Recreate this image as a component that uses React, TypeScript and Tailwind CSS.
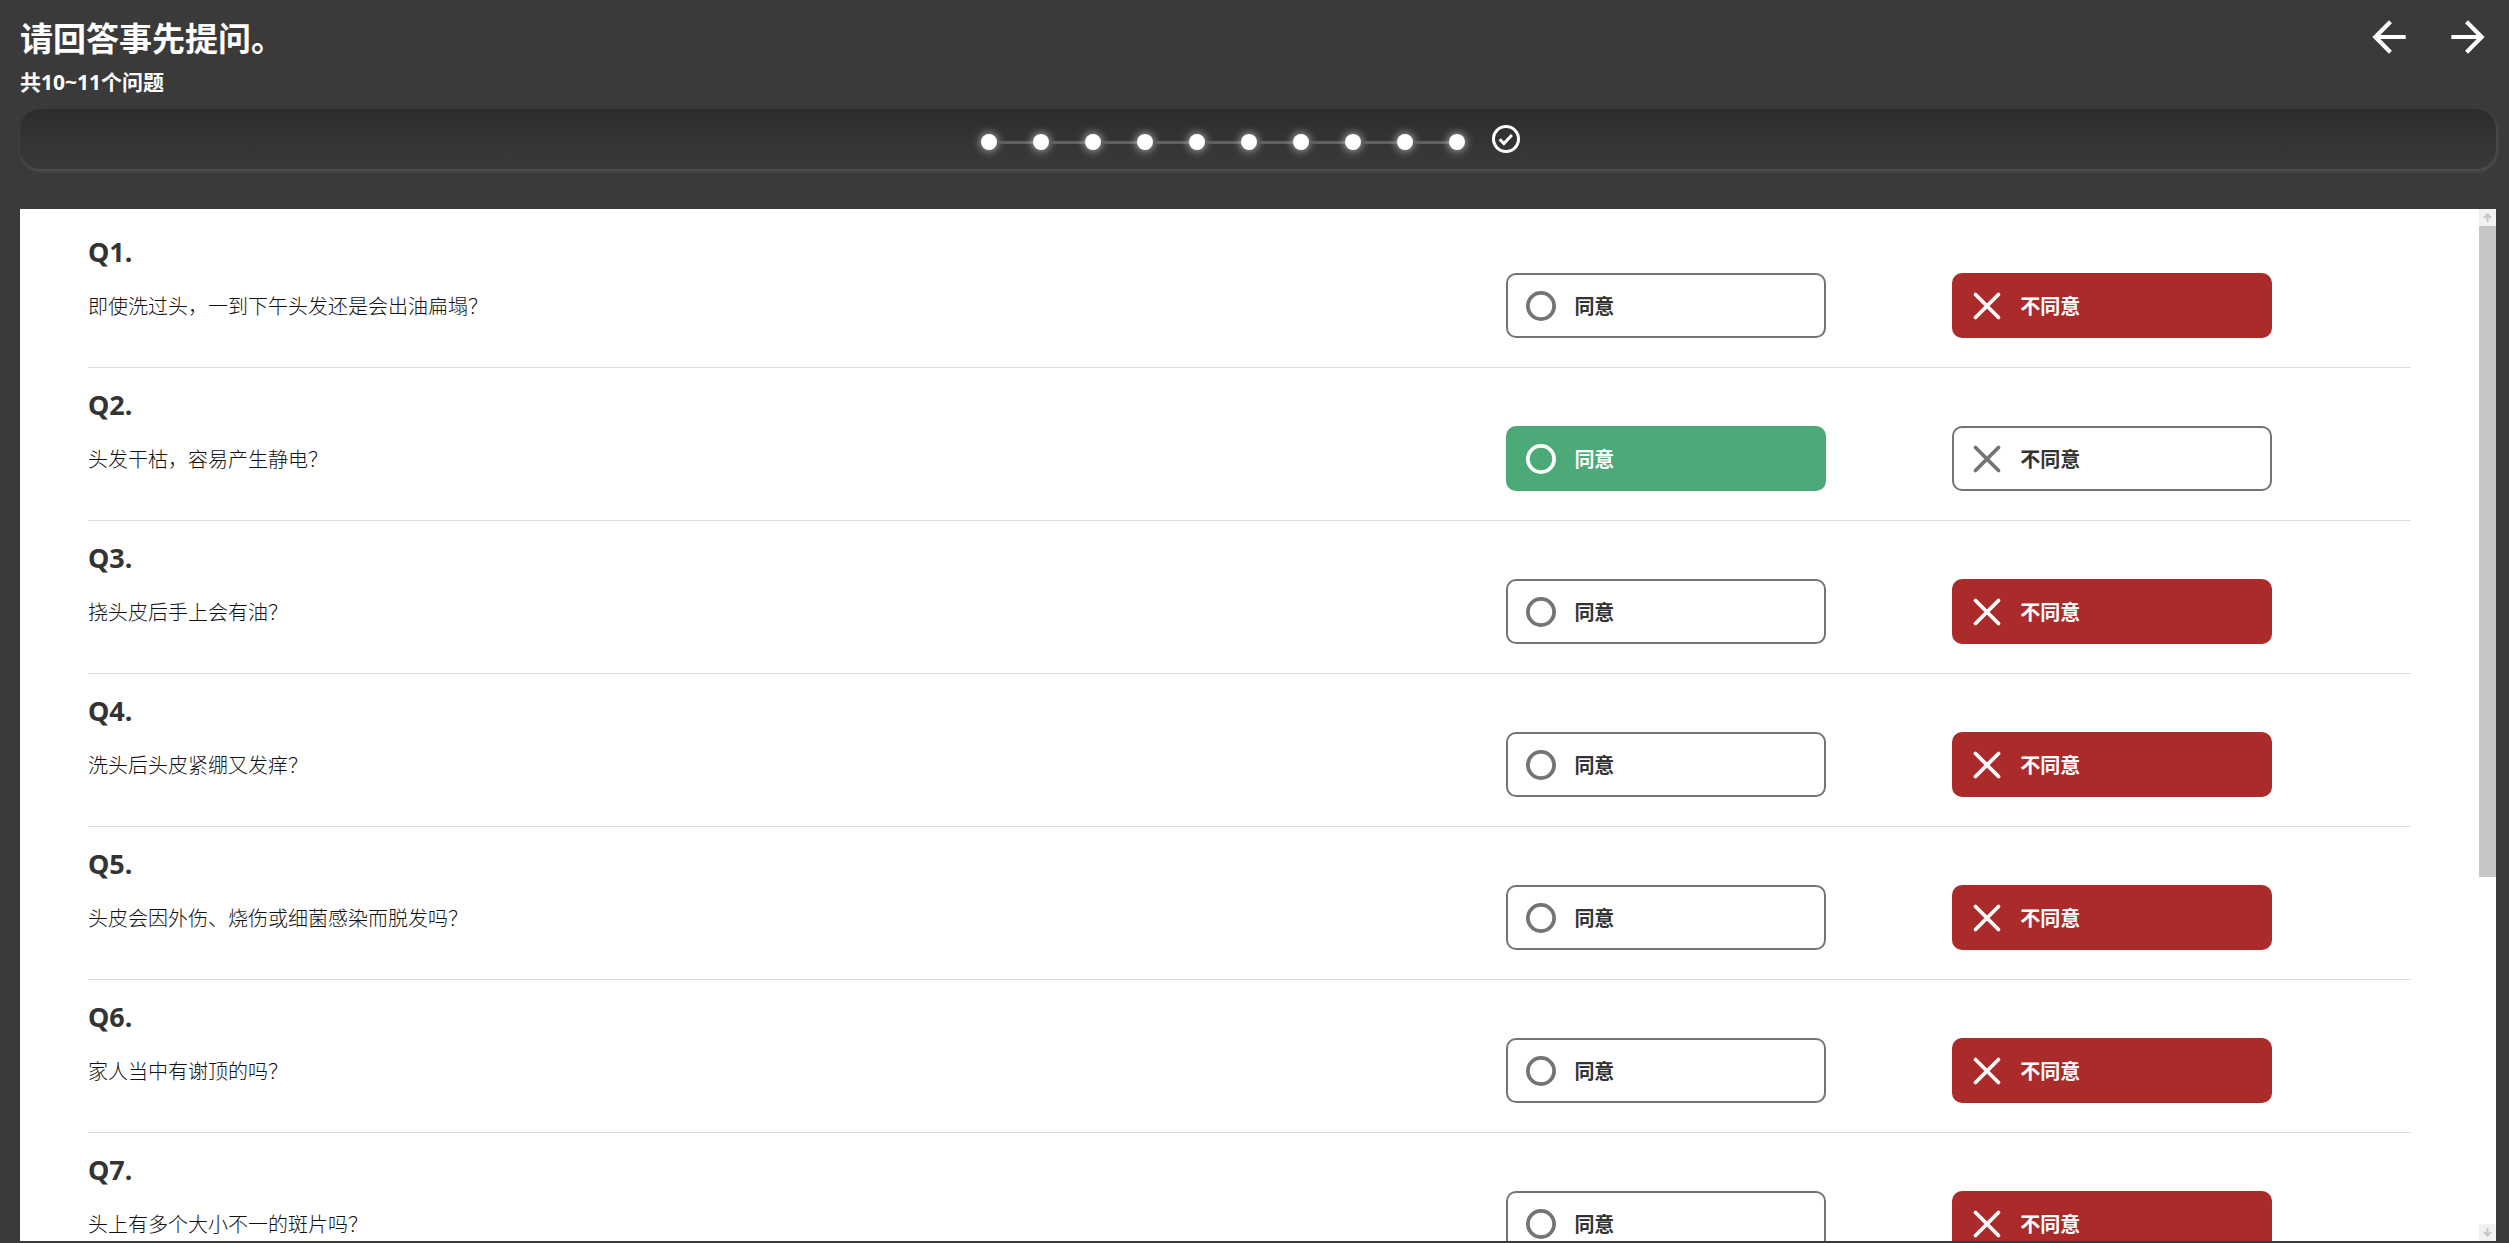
import React, { useState } from "react";
import { MdArrowBack, MdArrowForward } from "react-icons/md";

type Answer = "agree" | "disagree";

const questions: { text: string; answer: Answer }[] = [
  { text: "即使洗过头，一到下午头发还是会出油扁塌？", answer: "disagree" },
  { text: "头发干枯，容易产生静电？", answer: "agree" },
  { text: "挠头皮后手上会有油？", answer: "disagree" },
  { text: "洗头后头皮紧绷又发痒？", answer: "disagree" },
  { text: "头皮会因外伤、烧伤或细菌感染而脱发吗？", answer: "disagree" },
  { text: "家人当中有谢顶的吗？", answer: "disagree" },
  { text: "头上有多个大小不一的斑片吗？", answer: "disagree" },
];

const STEPS = 10;

function Progress() {
  return (
    <div className="flex h-[60px] items-center justify-center rounded-[20px] bg-linear-to-b from-[#2c2c2c] to-[#3a3a3a] pr-[15px] shadow-[1px_2px_3px_1px_#4c4c4c]">
      <ol className="flex items-center pt-[6px]">
        {Array.from({ length: STEPS }, (_, i) => (
          <li key={i} className="flex items-center">
            {i > 0 && <span className="h-[3px] w-9 bg-[#606060]" />}
            <span className="size-4 rounded-full bg-white shadow-[0_0_8px_1px_rgba(255,255,255,0.6)]" />
          </li>
        ))}
      </ol>
      <svg viewBox="0 0 28 28" className="ml-[27px] size-7" fill="none" stroke="#fff">
        <circle cx="14" cy="14" r="12.5" strokeWidth="3" />
        <path d="M7.7 14.3l4.2 4.2 8-8.5" strokeWidth="3" />
      </svg>
    </div>
  );
}

function Choice({ kind, active, onClick }: { kind: Answer; active: boolean; onClick: () => void }) {
  const color = active
    ? kind === "agree"
      ? "border-[#4ca978] bg-[#4ca978] text-white"
      : "border-[#ab2b2b] bg-[#ab2b2b] text-white"
    : "border-[#747474] bg-white text-[#747474]";

  return (
    <button
      type="button"
      aria-pressed={active}
      onClick={onClick}
      className={`flex h-[65px] w-80 items-center gap-[18px] rounded-[10px] border-2 pl-[18px] ${color}`}
    >
      <svg viewBox="0 0 30 30" className="size-[30px]" fill="none" stroke="currentColor">
        {kind === "agree" ? (
          <circle cx="15" cy="15" r="13.1" strokeWidth="3.8" />
        ) : (
          <path d="M3.5 3.5l23 23M26.5 3.5l-23 23" strokeWidth="3.8" strokeLinecap="round" />
        )}
      </svg>
      <span className={`pt-[2px] text-[20px] font-bold ${active ? "text-white" : "text-[#333]"}`}>
        {kind === "agree" ? "同意" : "不同意"}
      </span>
    </button>
  );
}

export default function App() {
  const [answers, setAnswers] = useState<Answer[]>(questions.map((q) => q.answer));

  const choose = (index: number, value: Answer) =>
    setAnswers(answers.map((a, i) => (i === index ? value : a)));

  return (
    <div className="flex h-screen flex-col bg-[#3a3a3a] pr-[13px] pb-[2px] pl-5 font-['Noto_Sans','Noto_Sans_CJK_SC',sans-serif]">
      <header className="flex items-start justify-between pt-3 pb-[10px]">
        <div className="pt-px text-white">
          <h1 className="text-[33px] leading-[52px] font-bold">请回答事先提问。</h1>
          <p className="text-[21px] leading-[34px] font-bold">共10~11个问题</p>
        </div>
        <nav className="flex gap-[29px] pr-[3px] text-[50px] text-white">
          <button type="button" aria-label="上一页"><MdArrowBack /></button>
          <button type="button" aria-label="下一页"><MdArrowForward /></button>
        </nav>
      </header>

      <Progress />

      <main className="mt-10 flex min-h-0 flex-1 bg-white">
        <div className="flex-1 overflow-y-auto px-[68px] pt-[6px] [scrollbar-width:none]">
          {questions.map((q, i) => (
            <section
              key={i}
              className="grid h-[153px] grid-cols-[1419fr_446fr_459fr] items-end border-b border-[#dedede] pb-[28px] text-[#333]"
            >
              <div>
                <h2 className="text-[27px] leading-[44px] font-bold">Q{i + 1}.</h2>
                <p className="text-[20px] leading-[65px] font-light text-[#111]">{q.text}</p>
              </div>
              <div className="pb-px">
                <Choice kind="agree" active={answers[i] === "agree"} onClick={() => choose(i, "agree")} />
              </div>
              <div className="pb-px">
                <Choice kind="disagree" active={answers[i] === "disagree"} onClick={() => choose(i, "disagree")} />
              </div>
            </section>
          ))}
        </div>

        {/* scrollbar */}
        <div className="flex w-[17px] flex-col">
          <div className="flex h-[17px] items-center justify-center bg-[#f1f1f1]">
            <svg viewBox="0 0 9 9" className="size-[9px]" fill="none" stroke="#c6c6c6" strokeWidth="2">
              <path d="M4.5 9V1.5M1 5l3.5-3.5L8 5" />
            </svg>
          </div>
          <div className="flex-1">
            <div className="h-[65.2%] bg-[#c6c6c6]" />
          </div>
          <div className="flex h-[17px] items-center justify-center bg-[#f1f1f1]">
            <svg viewBox="0 0 9 9" className="size-[9px]" fill="none" stroke="#c6c6c6" strokeWidth="2">
              <path d="M4.5 0v7.5M1 4l3.5 3.5L8 4" />
            </svg>
          </div>
        </div>
      </main>
    </div>
  );
}
